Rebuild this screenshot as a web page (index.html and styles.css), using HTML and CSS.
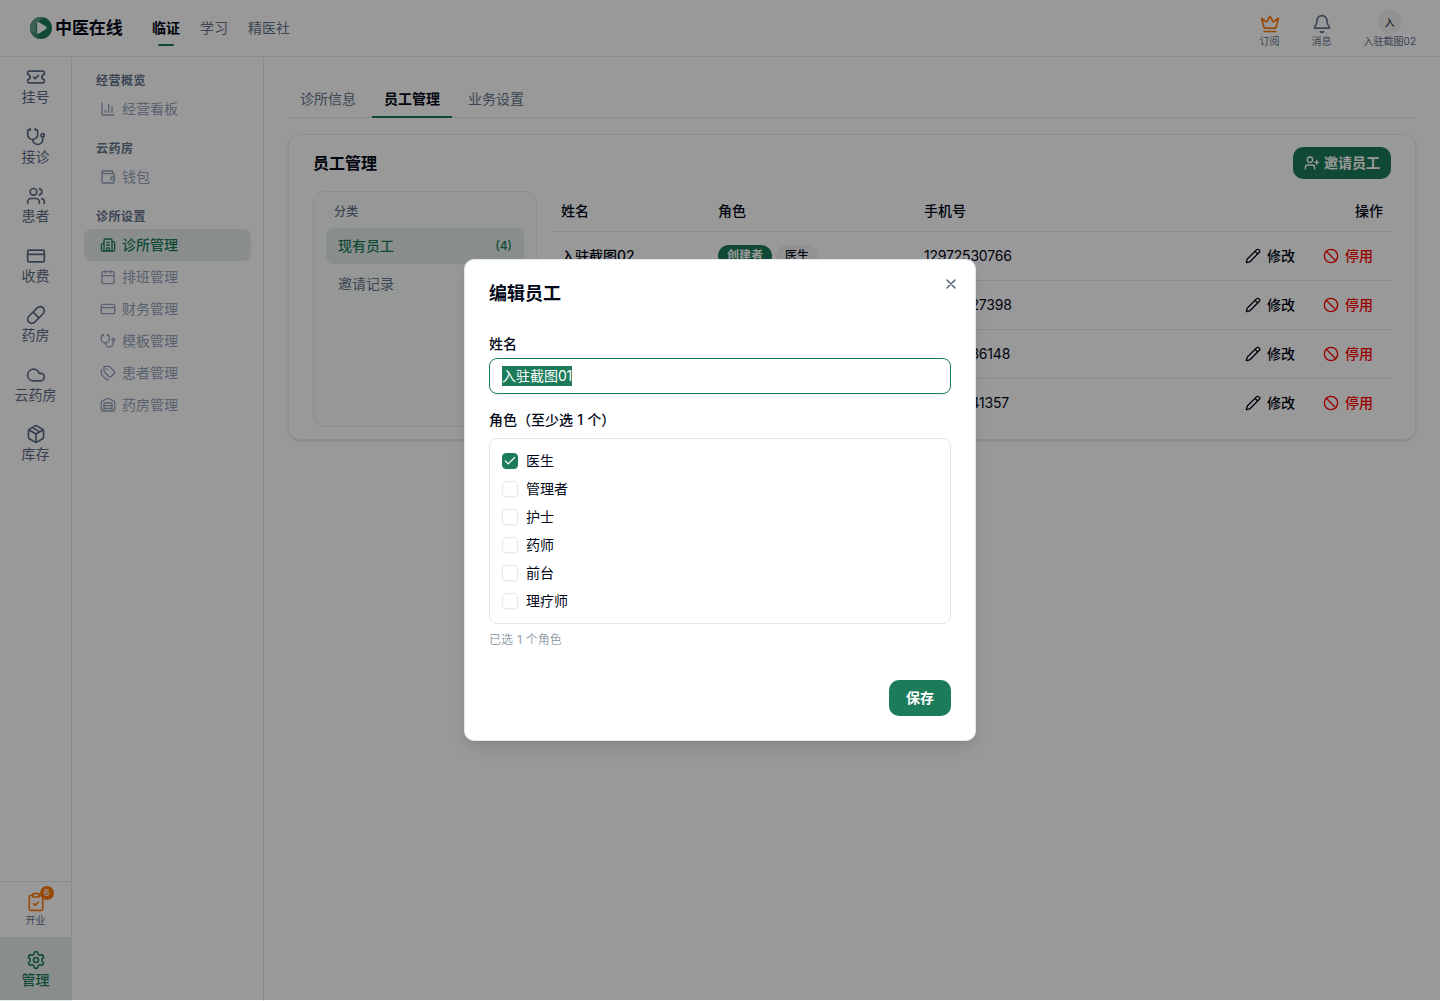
FILE: index.html
```html
<!DOCTYPE html>
<html lang="zh-CN">
<head>
<meta charset="utf-8">
<title>中医在线 - 员工管理</title>
<link rel="stylesheet" href="styles.css">
</head>
<body>
<svg class="sprite" aria-hidden="true">
  <symbol id="ticket" viewBox="0 0 24 24"><path d="M2 9a3 3 0 1 1 0 6v2a2 2 0 0 0 2 2h16a2 2 0 0 0 2-2v-2a3 3 0 1 1 0-6V7a2 2 0 0 0-2-2H4a2 2 0 0 0-2 2Z"/><path d="m9 12 2 2 4-4"/></symbol>
  <symbol id="stethoscope" viewBox="0 0 24 24"><path d="M11 2v2M5 2v2M5 3H4a2 2 0 0 0-2 2v4a6 6 0 0 0 12 0V5a2 2 0 0 0-2-2h-1"/><path d="M8 15a6 6 0 0 0 12 0v-3"/><circle cx="20" cy="10" r="2"/></symbol>
  <symbol id="users" viewBox="0 0 24 24"><path d="M16 21v-2a4 4 0 0 0-4-4H6a4 4 0 0 0-4 4v2"/><circle cx="9" cy="7" r="4"/><path d="M22 21v-2a4 4 0 0 0-3-3.87M16 3.13a4 4 0 0 1 0 7.75"/></symbol>
  <symbol id="card" viewBox="0 0 24 24"><rect width="20" height="14" x="2" y="5" rx="2"/><path d="M2 10h20"/></symbol>
  <symbol id="pill" viewBox="0 0 24 24"><path d="m10.5 20.5 10-10a4.95 4.95 0 1 0-7-7l-10 10a4.95 4.95 0 1 0 7 7ZM8.5 8.5l7 7"/></symbol>
  <symbol id="cloud" viewBox="0 0 24 24"><path d="M17.5 19H9a7 7 0 1 1 6.71-9h1.79a4.5 4.5 0 1 1 0 9Z"/></symbol>
  <symbol id="package" viewBox="0 0 24 24"><path d="M11 21.73a2 2 0 0 0 2 0l7-4A2 2 0 0 0 21 16V8a2 2 0 0 0-1-1.73l-7-4a2 2 0 0 0-2 0l-7 4A2 2 0 0 0 3 8v8a2 2 0 0 0 1 1.73zM12 22V12M3.3 7 12 12l8.7-5M7.5 4.27l9 5.15"/></symbol>
  <symbol id="clipboard" viewBox="0 0 24 24"><rect width="8" height="4" x="8" y="2" rx="1"/><path d="M16 4h2a2 2 0 0 1 2 2v14a2 2 0 0 1-2 2H6a2 2 0 0 1-2-2V6a2 2 0 0 1 2-2h2M9 14l2 2 4-4"/></symbol>
  <symbol id="gear" viewBox="0 0 24 24"><path d="M9.671 4.136a2.34 2.34 0 0 1 4.659 0 2.34 2.34 0 0 0 3.319 1.915 2.34 2.34 0 0 1 2.33 4.033 2.34 2.34 0 0 0 0 3.831 2.34 2.34 0 0 1-2.33 4.033 2.34 2.34 0 0 0-3.319 1.915 2.34 2.34 0 0 1-4.659 0 2.34 2.34 0 0 0-3.32-1.915 2.34 2.34 0 0 1-2.33-4.033 2.34 2.34 0 0 0 0-3.831A2.34 2.34 0 0 1 6.35 6.051a2.34 2.34 0 0 0 3.319-1.915"/><circle cx="12" cy="12" r="3"/></symbol>
  <symbol id="chart" viewBox="0 0 24 24"><path d="M3 3v16a2 2 0 0 0 2 2h16M18 17V9M13 17V5M8 17v-3"/></symbol>
  <symbol id="wallet" viewBox="0 0 24 24"><path d="M19 7V4a1 1 0 0 0-1-1H5a2 2 0 0 0 0 4h15a1 1 0 0 1 1 1v4h-3a2 2 0 0 0 0 4h3a1 1 0 0 0 1-1v-2a1 1 0 0 0-1-1"/><path d="M3 5v14a2 2 0 0 0 2 2h15a1 1 0 0 0 1-1v-4"/></symbol>
  <symbol id="building" viewBox="0 0 24 24"><path d="M10 12h4M10 8h4M14 21v-3a2 2 0 0 0-4 0v3"/><path d="M6 10H4a2 2 0 0 0-2 2v7a2 2 0 0 0 2 2h16a2 2 0 0 0 2-2V9a2 2 0 0 0-2-2h-2"/><path d="M6 21V5a2 2 0 0 1 2-2h8a2 2 0 0 1 2 2v16"/></symbol>
  <symbol id="calendar" viewBox="0 0 24 24"><path d="M8 2v4M16 2v4M3 10h18"/><rect width="18" height="18" x="3" y="4" rx="2"/></symbol>
  <symbol id="tags" viewBox="0 0 24 24"><path d="M13.172 2a2 2 0 0 1 1.414.586l6.71 6.71a2.4 2.4 0 0 1 0 3.408l-4.592 4.592a2.4 2.4 0 0 1-3.408 0l-6.71-6.71A2 2 0 0 1 6 9.172V3a1 1 0 0 1 1-1z"/><path d="M2 7v6.172a2 2 0 0 0 .586 1.414l6.71 6.71a2.4 2.4 0 0 0 3.191.193"/><circle cx="10.5" cy="6.5" r=".5"/></symbol>
  <symbol id="warehouse" viewBox="0 0 24 24"><path d="M18 21V10a1 1 0 0 0-1-1H7a1 1 0 0 0-1 1v11"/><path d="M22 19a2 2 0 0 1-2 2H4a2 2 0 0 1-2-2V8a2 2 0 0 1 1.132-1.803l7.95-3.974a2 2 0 0 1 1.837 0l7.948 3.974A2 2 0 0 1 22 8zM6 13h12M6 17h12"/></symbol>
  <symbol id="crown" viewBox="0 0 24 24"><path d="M11.562 3.266a.5.5 0 0 1 .876 0L15.39 8.87a1 1 0 0 0 1.516.294L21.183 5.5a.5.5 0 0 1 .798.519l-2.834 10.246a1 1 0 0 1-.956.734H5.81a1 1 0 0 1-.957-.734L2.02 6.02a.5.5 0 0 1 .798-.519l4.276 3.664a1 1 0 0 0 1.516-.294zM5 21h14"/></symbol>
  <symbol id="bell" viewBox="0 0 24 24"><path d="M10.268 21a2 2 0 0 0 3.464 0M3.262 15.326A1 1 0 0 0 4 17h16a1 1 0 0 0 .74-1.673C19.41 13.956 18 12.499 18 8A6 6 0 0 0 6 8c0 4.499-1.411 5.956-2.738 7.326"/></symbol>
  <symbol id="invite" viewBox="0 0 24 24"><path d="M16 21v-2a4 4 0 0 0-4-4H6a4 4 0 0 0-4 4v2M19 8v6M22 11h-6"/><circle cx="9" cy="7" r="4"/></symbol>
  <symbol id="pencil" viewBox="0 0 24 24"><path d="M21.174 6.812a1 1 0 0 0-3.986-3.987L3.842 16.174a2 2 0 0 0-.5.83l-1.321 4.352a.5.5 0 0 0 .623.622l4.353-1.32a2 2 0 0 0 .83-.497zM15 5l4 4"/></symbol>
  <symbol id="ban" viewBox="0 0 24 24"><circle cx="12" cy="12" r="10"/><path d="m4.9 4.9 14.2 14.2"/></symbol>
  <symbol id="close" viewBox="0 0 24 24"><path d="M18 6 6 18M6 6l12 12"/></symbol>
  <symbol id="check" viewBox="0 0 24 24"><path d="M20 6 9 17l-5-5"/></symbol>
</svg>

<div class="app">
  <header class="topbar">
    <div class="brand">
      <svg class="logo" viewBox="0 0 22 22"><clipPath id="disc"><circle cx="11" cy="11" r="11"/></clipPath><g clip-path="url(#disc)"><path fill="#1c7c5a" d="M0 0h22v22H0z"/><path d="M0 0H15Q6 4 6 11Q6 15 7.500 18Q3 15 0 14Z" fill="#67a287"/><path d="M0 14Q3 15 7.500 18L10 22H0Z" fill="#3f9070"/></g><path d="M7.200 6.200Q7.200 4.300 9 5.200L16 9.600Q17.600 10.800 16 12L9 16.600Q7.200 17.500 7.200 15.500Z" fill="#fff"/></svg>
      <span class="brand-name">中医在线</span>
    </div>
    <nav class="topnav"><a class="active">临证</a><a>学习</a><a>精医社</a></nav>
    <div class="topbar-tools">
      <div class="tool"><svg class="icon orange"><use href="#crown"/></svg><span>订阅</span></div>
      <div class="tool"><svg class="icon"><use href="#bell"/></svg><span>消息</span></div>
      <div class="tool account"><span class="avatar">入</span><span>入驻截图02</span></div>
    </div>
  </header>

  <div class="body">
    <aside class="rail">
      <div class="rail-item"><svg class="icon"><use href="#ticket"/></svg>挂号</div>
      <div class="rail-item"><svg class="icon"><use href="#stethoscope"/></svg>接诊</div>
      <div class="rail-item"><svg class="icon"><use href="#users"/></svg>患者</div>
      <div class="rail-item"><svg class="icon"><use href="#card"/></svg>收费</div>
      <div class="rail-item"><svg class="icon"><use href="#pill"/></svg>药房</div>
      <div class="rail-item"><svg class="icon"><use href="#cloud"/></svg>云药房</div>
      <div class="rail-item"><svg class="icon"><use href="#package"/></svg>库存</div>
      <div class="rail-opening"><span class="opening-icon"><svg class="icon orange"><use href="#clipboard"/></svg><b class="count">6</b></span>开业</div>
      <div class="rail-item rail-active"><svg class="icon"><use href="#gear"/></svg>管理</div>
    </aside>

    <aside class="sidebar">
      <section><h4>经营概览</h4>
        <a><svg class="icon sm"><use href="#chart"/></svg>经营看板</a></section>
      <section><h4>云药房</h4>
        <a><svg class="icon sm"><use href="#wallet"/></svg>钱包</a></section>
      <section><h4>诊所设置</h4>
        <a class="active"><svg class="icon sm"><use href="#building"/></svg>诊所管理</a>
        <a><svg class="icon sm"><use href="#calendar"/></svg>排班管理</a>
        <a><svg class="icon sm"><use href="#card"/></svg>财务管理</a>
        <a><svg class="icon sm"><use href="#stethoscope"/></svg>模板管理</a>
        <a><svg class="icon sm"><use href="#tags"/></svg>患者管理</a>
        <a><svg class="icon sm"><use href="#warehouse"/></svg>药房管理</a></section>
    </aside>

    <main class="main">
      <nav class="tabs"><a>诊所信息</a><a class="active">员工管理</a><a>业务设置</a></nav>
      <section class="card">
        <div class="card-head"><h2>员工管理</h2><button class="invite"><svg class="icon sm"><use href="#invite"/></svg>邀请员工</button></div>
        <div class="card-body">
          <div class="categories">
            <h5>分类</h5>
            <a class="active">现有员工<span class="total">(4)</span></a>
            <a>邀请记录</a>
          </div>
          <table class="staff">
            <colgroup><col class="col-name"><col class="col-role"><col><col class="col-ops"></colgroup>
            <thead><tr><th>姓名</th><th>角色</th><th>手机号</th><th class="right">操作</th></tr></thead>
            <tbody>
              <tr><td class="name">入驻截图02</td><td><div class="badges"><span class="badge owner">创建者</span><span class="badge">医生</span></div></td><td class="phone">12972530766</td><td><div class="ops"><button><svg class="icon sm"><use href="#pencil"/></svg>修改</button><button class="danger"><svg class="icon sm"><use href="#ban"/></svg>停用</button></div></td></tr>
              <tr><td></td><td></td><td class="phone">12972527398</td><td><div class="ops"><button><svg class="icon sm"><use href="#pencil"/></svg>修改</button><button class="danger"><svg class="icon sm"><use href="#ban"/></svg>停用</button></div></td></tr>
              <tr><td></td><td></td><td class="phone">12972536148</td><td><div class="ops"><button><svg class="icon sm"><use href="#pencil"/></svg>修改</button><button class="danger"><svg class="icon sm"><use href="#ban"/></svg>停用</button></div></td></tr>
              <tr><td></td><td></td><td class="phone">12972541357</td><td><div class="ops"><button><svg class="icon sm"><use href="#pencil"/></svg>修改</button><button class="danger"><svg class="icon sm"><use href="#ban"/></svg>停用</button></div></td></tr>
            </tbody>
          </table>
        </div>
      </section>
    </main>
  </div>
</div>

<div class="overlay">
  <div class="dialog" role="dialog">
    <div class="dialog-head"><h3>编辑员工</h3><svg class="icon sm close"><use href="#close"/></svg></div>
    <label class="label">姓名</label>
    <div class="input"><span class="selected">入驻截图<span class="digits">01</span></span></div>
    <label class="label roles-label">角色（至少选 1 个）</label>
    <div class="roles">
      <div class="role"><span class="box checked"><svg class="icon tick"><use href="#check"/></svg></span>医生</div>
      <div class="role"><span class="box"></span>管理者</div>
      <div class="role"><span class="box"></span>护士</div>
      <div class="role"><span class="box"></span>药师</div>
      <div class="role"><span class="box"></span>前台</div>
      <div class="role"><span class="box"></span>理疗师</div>
    </div>
    <p class="hint">已选 1 个角色</p>
    <div class="dialog-foot"><button class="save">保存</button></div>
  </div>
</div>
</body>
</html>
```
FILE: styles.css
```css
:root {
  --fg: #020817;
  --muted: #64748b;
  --soft: #94a3b8;
  --line: #e2e8f0;
  --primary: #1c7c5a;
  --tint: #e4edeb;
}
* { box-sizing: border-box; }
html, body { height: 100%; }
body {
  margin: 0;
  overflow: hidden;
  background: #fff;
  color: var(--fg);
  font: 14px/20px Inter, "Noto Sans CJK SC", sans-serif;
}
h2, h3, h4, h5, p { margin: 0; }
button { border: 0; background: none; color: inherit; font: inherit; padding: 0; display: flex; align-items: center; }
.sprite { display: none; }
.icon { width: 20px; height: 20px; flex: none; display: block; fill: none; stroke: currentColor; stroke-width: 2; stroke-linecap: round; stroke-linejoin: round; }
.icon.sm { width: 16px; height: 16px; }
.orange { color: #ff7b0c; }

.app { height: 100%; display: flex; flex-direction: column; }
.topbar { height: 57px; flex: none; border-bottom: 1px solid var(--line); display: flex; padding: 0 24px 0 30px; }
.brand { display: flex; align-items: center; gap: 3px; width: 122px; }
.logo { width: 22px; height: 22px; }
.brand-name { font-size: 17px; font-weight: 600; letter-spacing: -.1px; white-space: nowrap; }
.topnav { display: flex; gap: 20px; color: var(--muted); }
.topnav a { display: flex; flex-direction: column; align-items: center; padding-top: 18px; }
.topnav .active { color: var(--fg); font-weight: 600; }
.topnav .active::after { content: ""; width: 16px; height: 2px; margin-top: 6px; border-radius: 1px; background: var(--primary); }
.topbar-tools { margin-left: auto; display: flex; gap: 32px; color: var(--muted); font-size: 10px; line-height: 14px; }
.tool { display: flex; flex-direction: column; align-items: center; padding-top: 14px; min-width: 20px; white-space: nowrap; }
.account { padding-top: 10px; }
.avatar { width: 24px; height: 24px; border-radius: 50%; background: #f3f4f5; color: var(--fg); display: grid; place-items: center; }

.body { flex: 1; min-height: 0; display: flex; }
.rail { width: 72px; flex: none; border-right: 1px solid var(--line); display: flex; flex-direction: column; color: var(--muted); }
.rail-item { height: 59.5px; padding-top: 10px; display: flex; flex-direction: column; align-items: center; color: #5b6b83; }
.rail-opening { margin-top: auto; height: 56px; border-top: 1px solid var(--line); padding-top: 10px; display: flex; flex-direction: column; align-items: center; font-size: 10px; line-height: 16px; }
.opening-icon { position: relative; }
.count { position: absolute; top: -6px; left: 14px; width: 14px; height: 14px; border-radius: 7px; background: #ff7b0c; color: #fff; font-size: 9px; line-height: 14px; text-align: center; font-weight: 500; }
.rail-active { height: 64px; padding-top: 13px; background: var(--tint); color: var(--primary); font-weight: 500; }

.sidebar { width: 192px; flex: none; border-right: 1px solid var(--line); padding: 12px; display: flex; flex-direction: column; gap: 12px; }
.sidebar h4 { height: 24px; padding: 4px 12px; font-size: 12px; line-height: 16px; font-weight: 600; letter-spacing: .5px; color: var(--muted); }
.sidebar a { height: 32px; padding: 0 16px; display: flex; align-items: center; gap: 6px; border-radius: 8px; color: var(--soft); }
.sidebar .active { background: var(--tint); color: var(--primary); font-weight: 500; }

.main { flex: 1; min-width: 0; padding: 24px; }
.tabs { display: flex; gap: 4px; height: 37px; border-bottom: 1px solid var(--line); color: var(--muted); }
.tabs a { height: 37px; padding: 8px 12px; }
.tabs .active { color: var(--fg); font-weight: 600; border-bottom: 2px solid var(--primary); }
.card { margin-top: 16px; padding: 12px 24px; border: 1px solid #e6eaee; border-radius: 12px; box-shadow: 0 1px 3px rgba(0,0,0,.1), 0 1px 2px -1px rgba(0,0,0,.1); }
.card-head { height: 32px; display: flex; align-items: center; justify-content: space-between; }
.card-head h2 { font-size: 16px; font-weight: 600; }
.invite { height: 32px; padding: 0 11px; gap: 4px; border-radius: 10px; background: var(--primary); color: #fff; font-weight: 600; }
.card-body { margin-top: 12px; display: flex; gap: 16px; }
.categories { width: 224px; flex: none; padding: 12px; border: 1px solid #e9eded; border-radius: 12px; background: #fbfdfc; color: var(--muted); }
.categories h5 { padding: 0 8px; margin-bottom: 8px; font-size: 12px; line-height: 16px; font-weight: 500; letter-spacing: .3px; }
.categories a { height: 36px; padding: 0 12px; margin-bottom: 2px; border-radius: 8px; display: flex; align-items: center; justify-content: space-between; }
.categories .active { background: var(--tint); color: var(--primary); font-weight: 500; }
.total { font-size: 12px; }

.staff { flex: 1; border-collapse: separate; border-spacing: 0; table-layout: fixed; }
.col-name { width: 157px; }
.col-role { width: 206px; }
.col-ops { width: 200px; }
.staff th { height: 41px; padding: 0 8px; text-align: left; font-weight: 500; border-bottom: 1px solid var(--line); }
.staff th.right { text-align: right; }
.staff td { height: 49px; padding: 0 8px; border-bottom: 1px solid var(--line); }
.staff tr:last-child td { height: 48px; border-bottom: 0; }
.name { font-weight: 500; }
.phone { letter-spacing: -.2px; }
.digits { letter-spacing: -.4px; }
.badges { display: flex; gap: 4px; }
.badge { height: 22px; padding: 0 9px; border-radius: 11px; background: #f3f4f5; font-size: 12px; line-height: 22px; font-weight: 500; }
.badge.owner { background: var(--primary); color: #fff; font-weight: 700; }
.ops { display: flex; justify-content: flex-end; gap: 8px; }
.ops button { height: 32px; padding: 0 10px; gap: 6px; font-weight: 500; }
.ops .danger { color: #f00; }

.overlay { position: absolute; inset: 0 0 auto 0; height: 1000px; background: rgba(0,0,0,.4); display: flex; align-items: center; justify-content: center; }
.dialog { width: 512px; height: 482px; padding: 24px; border: 1px solid var(--line); border-radius: 10px; background: #fff; box-shadow: 0 10px 15px -3px rgba(0,0,0,.1), 0 4px 6px -4px rgba(0,0,0,.1); display: flex; flex-direction: column; }
.dialog-head { display: flex; justify-content: space-between; height: 18px; margin-bottom: 32px; }
.dialog-head h3 { font-size: 18px; line-height: 20px; font-weight: 600; }
.close { margin: -8px -8px 0 0; color: #475569; }
.label { font-weight: 500; word-spacing: .5px; }
.roles-label { margin-top: 16px; }
.input { margin-top: 4px; height: 36px; flex: none; border: 1px solid var(--primary); border-radius: 8px; padding: 7px 12px; box-shadow: 0 1px 2px rgba(0,0,0,.05); }
.selected { display: inline-block; height: 20px; background: var(--primary); color: #fff; }
.roles { margin-top: 8px; border: 1px solid var(--line); border-radius: 8px; padding: 12px; display: flex; flex-direction: column; gap: 8px; }
.role { display: flex; align-items: center; gap: 8px; height: 20px; }
.box { width: 16px; height: 16px; border: 1px solid var(--line); border-radius: 4px; box-shadow: 0 1px 2px rgba(0,0,0,.05); display: grid; place-items: center; }
.box.checked { background: var(--primary); border-color: var(--primary); color: #fff; }
.tick { width: 14px; height: 14px; }
.hint { margin-top: 8px; font-size: 12px; line-height: 16px; word-spacing: .5px; color: #94a3aa; }
.dialog-foot { margin-top: 32px; display: flex; justify-content: flex-end; }
.save { height: 36px; padding: 0 17px; border-radius: 10px; background: var(--primary); color: #fff; font-weight: 700; }
```
